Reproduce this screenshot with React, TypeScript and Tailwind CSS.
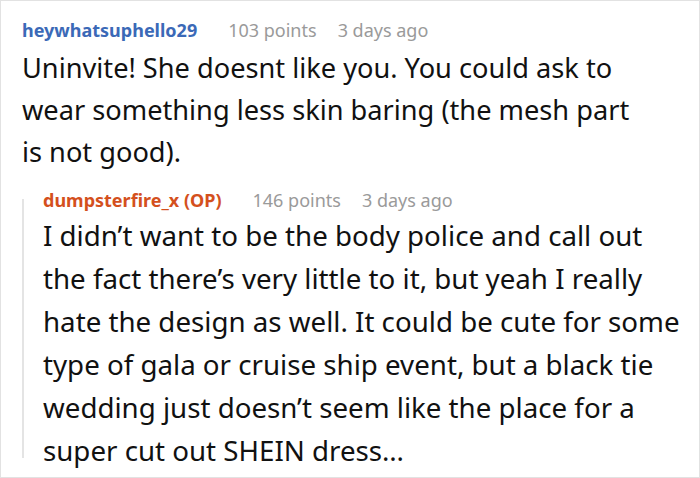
import React from "react";

export default function App() {
  return (
    <div
      className="w-[700px] h-[478px] bg-white border border-[#e2e2e2] overflow-hidden"
      style={{ fontFamily: '"Noto Sans", "Open Sans", sans-serif' }}
    >
      <div className="pl-[21px] pr-[12px] pt-[16px]">
        <div className="flex items-baseline text-[18px] leading-[26px]">
          <span className="font-bold text-[#3b69b7]">heywhatsuphello29</span>
          <span className="ml-[31px] text-[#9a9a9a]">103 points</span>
          <span className="ml-[21px] text-[#9a9a9a]">3 days ago</span>
        </div>
        <p className="text-[27.2px] leading-[42px] text-[#111] mt-[4px] mr-[32px]">
          Uninvite! She doesnt like you. You could ask to wear something less skin baring (the mesh part is not good).
        </p>
        <div className="mt-[14px] flex">
          <div className="w-[2px] bg-[#e4e4e4] mt-[12px] mb-[14px] shrink-0" />
          <div className="pl-[19px] flex-1">
            <div className="flex items-baseline text-[18px] leading-[26px]">
              <span className="font-bold text-[#d4501d]">dumpsterfire_x (OP)</span>
              <span className="ml-[31px] text-[#9a9a9a]">146 points</span>
              <span className="ml-[21px] text-[#9a9a9a]">3 days ago</span>
            </div>
            <p className="text-[27.7px] leading-[43px] text-[#111] mt-[1px]">
              I didn’t want to be the body police and call out the fact there’s very little to it, but yeah I really hate the design as well. It could be cute for some type of gala or cruise ship event, but a black tie wedding just doesn’t seem like the place for a super cut out SHEIN dress…
            </p>
          </div>
        </div>
      </div>
    </div>
  );
}
